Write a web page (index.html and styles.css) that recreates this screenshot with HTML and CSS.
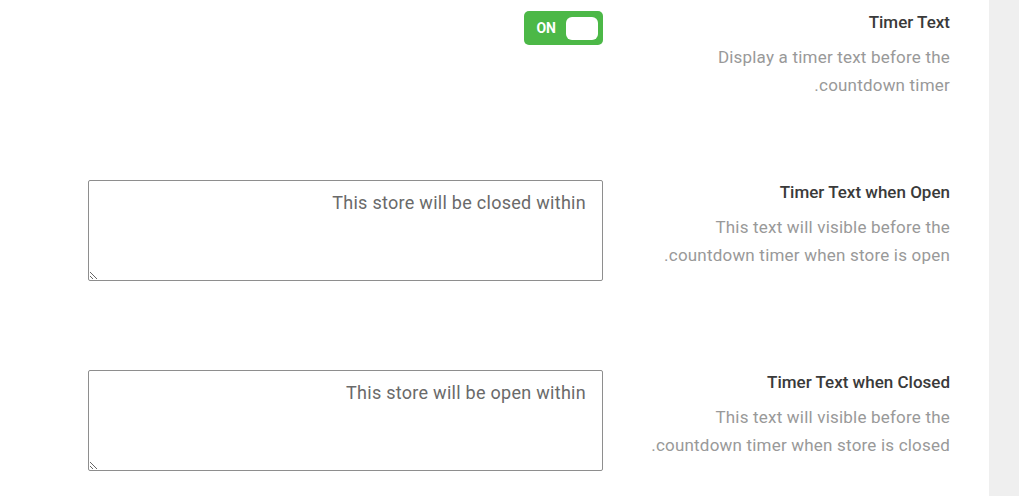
FILE: index.html
```html
<!DOCTYPE html>
<html lang="en" dir="rtl">
<head>
<meta charset="utf-8">
<title>Timer settings</title>
<link rel="stylesheet" href="styles.css">
</head>
<body>
<div class="page">
  <aside class="strip"></aside>
  <main class="settings">
    <section class="row">
      <div class="label">
        <h3 class="title">Timer Text</h3>
        <p class="desc">Display a timer text before the<br>countdown timer.</p>
      </div>
      <div class="control">
        <div class="toggle">
          <span class="knob"></span>
          <span class="toggle-text">ON</span>
        </div>
      </div>
    </section>
    <section class="row row-field">
      <div class="label">
        <h3 class="title">Timer Text when Open</h3>
        <p class="desc">This text will visible before the<br>countdown timer when store is open.</p>
      </div>
      <div class="control">
        <textarea class="field">This store will be closed within</textarea>
      </div>
    </section>
    <section class="row row-field">
      <div class="label">
        <h3 class="title">Timer Text when Closed</h3>
        <p class="desc">This text will visible before the<br>countdown timer when store is closed.</p>
      </div>
      <div class="control">
        <textarea class="field">This store will be open within</textarea>
      </div>
    </section>
  </main>
</div>
</body>
</html>
```

FILE: styles.css
```css
* { box-sizing: border-box; }
html, body { margin: 0; padding: 0; background: #fff; }
body {
  font-family: Roboto, "Liberation Sans", sans-serif;
  width: 1019px;
  height: 496px;
  overflow: hidden;
}
.page {
  display: flex;
  height: 496px;
}
.strip {
  width: 30px;
  flex: none;
  background: #efefef;
}
.settings {
  flex: 1;
  padding: 10px 39px 0 0;
  display: flex;
  flex-direction: column;
  gap: 81px;
}
.row {
  display: flex;
  align-items: flex-start;
  gap: 47px;
}
.label {
  width: 300px;
  flex: none;
}
.title {
  margin: 0;
  font-size: 17px;
  line-height: 24px;
  font-weight: 500;
  color: #3a3a3a;
}
.desc {
  margin: 9px 0 0;
  font-size: 17px;
  letter-spacing: 0.2px;
  line-height: 28px;
  color: #999;
  white-space: nowrap;
}
.control {
  width: 515px;
  flex: none;
  display: flex;
}
.row-field .control { padding-bottom: 8px; }
.toggle {
  width: 79px;
  height: 34px;
  margin-top: 1px;
  background: #4cb847;
  border-radius: 5px;
  display: flex;
  align-items: center;
  padding: 0 5px 0 0;
  gap: 10px;
}
.knob {
  width: 32px;
  height: 23px;
  background: #fff;
  border-radius: 6px;
}
.toggle-text {
  color: #fff;
  font-size: 14px;
  font-weight: 700;
  line-height: 1;
}
.field {
  display: block;
  width: 515px;
  height: 101px;
  margin: 0;
  border: 1px solid #8e8e8e;
  border-radius: 2px;
  padding: 9px 16px;
  font-family: Roboto, "Liberation Sans", sans-serif;
  font-size: 18px;
  letter-spacing: 0.28px;
  line-height: 25px;
  color: #6a6a6a;
  background: #fff;
  resize: vertical;
  outline: none;
}
```
